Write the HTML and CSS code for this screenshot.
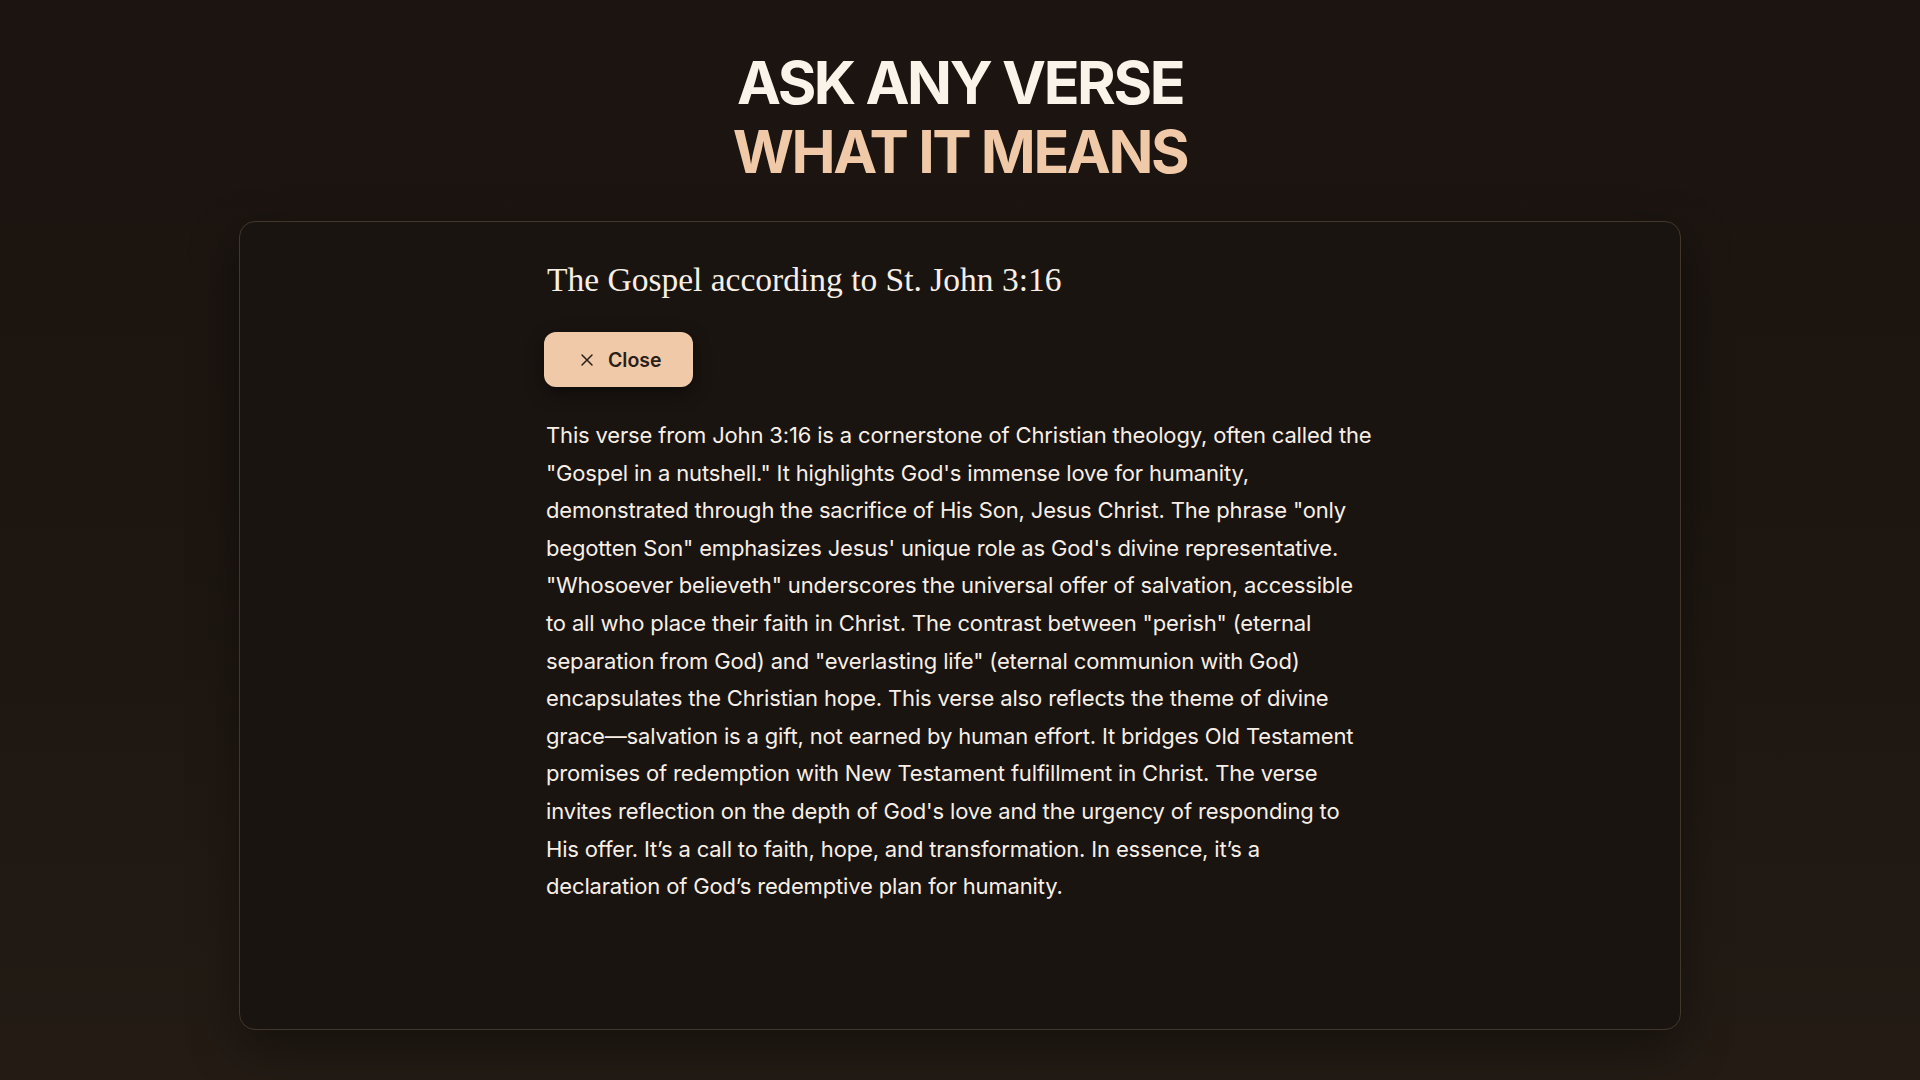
FILE: index.html
```html
<!DOCTYPE html>
<html lang="en">
<head>
<meta charset="utf-8">
<title>Ask Any Verse</title>
<link rel="stylesheet" href="styles.css">
</head>
<body>
<main class="page">
  <h1 class="hero">
    <span class="hero-line hero-line--light">ASK ANY VERSE</span>
    <span class="hero-line hero-line--accent">WHAT IT MEANS</span>
  </h1>
  <section class="card">
    <div class="card-inner">
      <h2 class="verse-title">The Gospel according to St. John 3:16</h2>
      <button class="close-btn" type="button">
        <svg class="close-icon" viewBox="0 0 16 16" width="16" height="16" aria-hidden="true">
          <path d="M3 3 L13 13 M13 3 L3 13" fill="none" stroke="currentColor" stroke-width="1.5" stroke-linecap="round"/>
        </svg>
        <span>Close</span>
      </button>
      <p class="explanation">This verse from John 3:16 is a cornerstone of Christian theology, often called the "Gospel in a nutshell." It highlights God's immense love for humanity, demonstrated through the sacrifice of His Son, Jesus Christ. The phrase "only begotten Son" emphasizes Jesus' unique role as God's divine representative. "Whosoever believeth" underscores the universal offer of salvation, accessible to all who place their faith in Christ. The contrast between "perish" (eternal separation from God) and "everlasting life" (eternal communion with God) encapsulates the Christian hope. This verse also reflects the theme of divine grace—salvation is a gift, not earned by human effort. It bridges Old Testament promises of redemption with New Testament fulfillment in Christ. The verse invites reflection on the depth of God's love and the urgency of responding to His offer. It’s a call to faith, hope, and transformation. In essence, it’s a declaration of God’s redemptive plan for humanity.</p>
    </div>
  </section>
</main>
</body>
</html>
```

FILE: styles.css
```css
* { box-sizing: border-box; }

html, body {
  margin: 0;
  padding: 0;
}

body {
  min-height: 100vh;
  background: linear-gradient(180deg, #1b1410 0%, #1c1510 45%, #231b14 100%);
  color: #f7efe6;
  font-family: "Inter", "Noto Sans", sans-serif;
}

.page {
  height: 100vh;
  display: flex;
  flex-direction: column;
  align-items: center;
  padding: 48px 0 50px;
}

.hero {
  margin: 0 0 35px;
  display: flex;
  flex-direction: column;
  align-items: center;
  font-family: "Inter", sans-serif;
  font-weight: 700;
  font-size: 59px;
  line-height: 69px;
  letter-spacing: -2.4px;
}

.hero-line--light { color: #faf3ea; }
.hero-line--accent { color: #f0c9a8; }

.card {
  flex: 1;
  width: 1442px;
  background: #1a1410;
  border: 1px solid #42372c;
  border-radius: 16px;
  box-shadow: 0 18px 50px rgba(0, 0, 0, 0.35);
  padding: 38px 0 0;
}

.card-inner {
  width: 832px;
  margin: 0 auto;
  display: flex;
  flex-direction: column;
  align-items: flex-start;
}

.verse-title {
  margin: 0 0 32px 3px;
  font-family: "Liberation Serif", "DejaVu Serif", serif;
  font-weight: 400;
  font-size: 33.5px;
  line-height: 40px;
  color: #f7efe6;
}

.close-btn {
  display: flex;
  align-items: center;
  gap: 13px;
  height: 55px;
  padding: 0 31px 0 35px;
  border: none;
  border-radius: 12px;
  background: #f0c9a9;
  color: #2a1f18;
  font-family: "Inter", sans-serif;
  font-weight: 600;
  font-size: 19.5px;
  box-shadow: 0 6px 18px rgba(0, 0, 0, 0.45);
  cursor: pointer;
}

.close-icon { display: block; }

.explanation {
  margin: 30px 0 0 2px;
  font-family: "Inter", sans-serif;
  font-size: 22px;
  line-height: 37.6px;
  letter-spacing: -0.16px;
  color: #f7efe6;
}
```
